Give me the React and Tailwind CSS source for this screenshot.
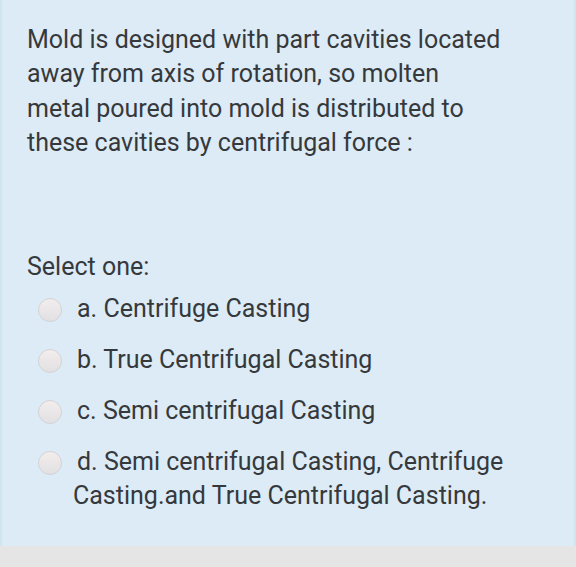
export default function App() {
  const options = [
    ["a. Centrifuge Casting"],
    ["b. True Centrifugal Casting"],
    ["c. Semi centrifugal Casting"],
    ["d. Semi centrifugal Casting, Centrifuge", "Casting.and True Centrifugal Casting."],
  ];

  return (
    <div className="w-[576px] h-[567px] flex flex-col bg-[#e5e5e5] font-['Roboto',sans-serif] text-[#36393c]">
      <div className="h-[546px] bg-[#dcebf6] border-l-2 border-r-2 border-[#cfe6ea] pl-[25px] pr-[20px] pt-[23px]">
        <p className="text-[25px] leading-[34.3px]">
          Mold is designed with part cavities located
          <br />
          away from axis of rotation, so molten
          <br />
          metal poured into mold is distributed to
          <br />
          these cavities by centrifugal force :
        </p>
        <p className="mt-[90px] text-[25px] leading-[34px]">Select one:</p>
        <div className="mt-[8px] flex flex-col gap-[17px]">
          {options.map((o) => (
            <div key={o[0]} className="pl-[46px] -indent-[35px] text-[25px] leading-[34px]">
              <span className="inline-block align-[-5px] w-[24px] h-[24px] mr-[15px] rounded-full border border-[#d3d3d6] bg-gradient-to-b from-[#f3eded] to-[#e1e0e2]" />
              {o[0]}
              {o[1] && (
                <>
                  <br />
                  {o[1]}
                </>
              )}
            </div>
          ))}
        </div>
      </div>
    </div>
  );
}
